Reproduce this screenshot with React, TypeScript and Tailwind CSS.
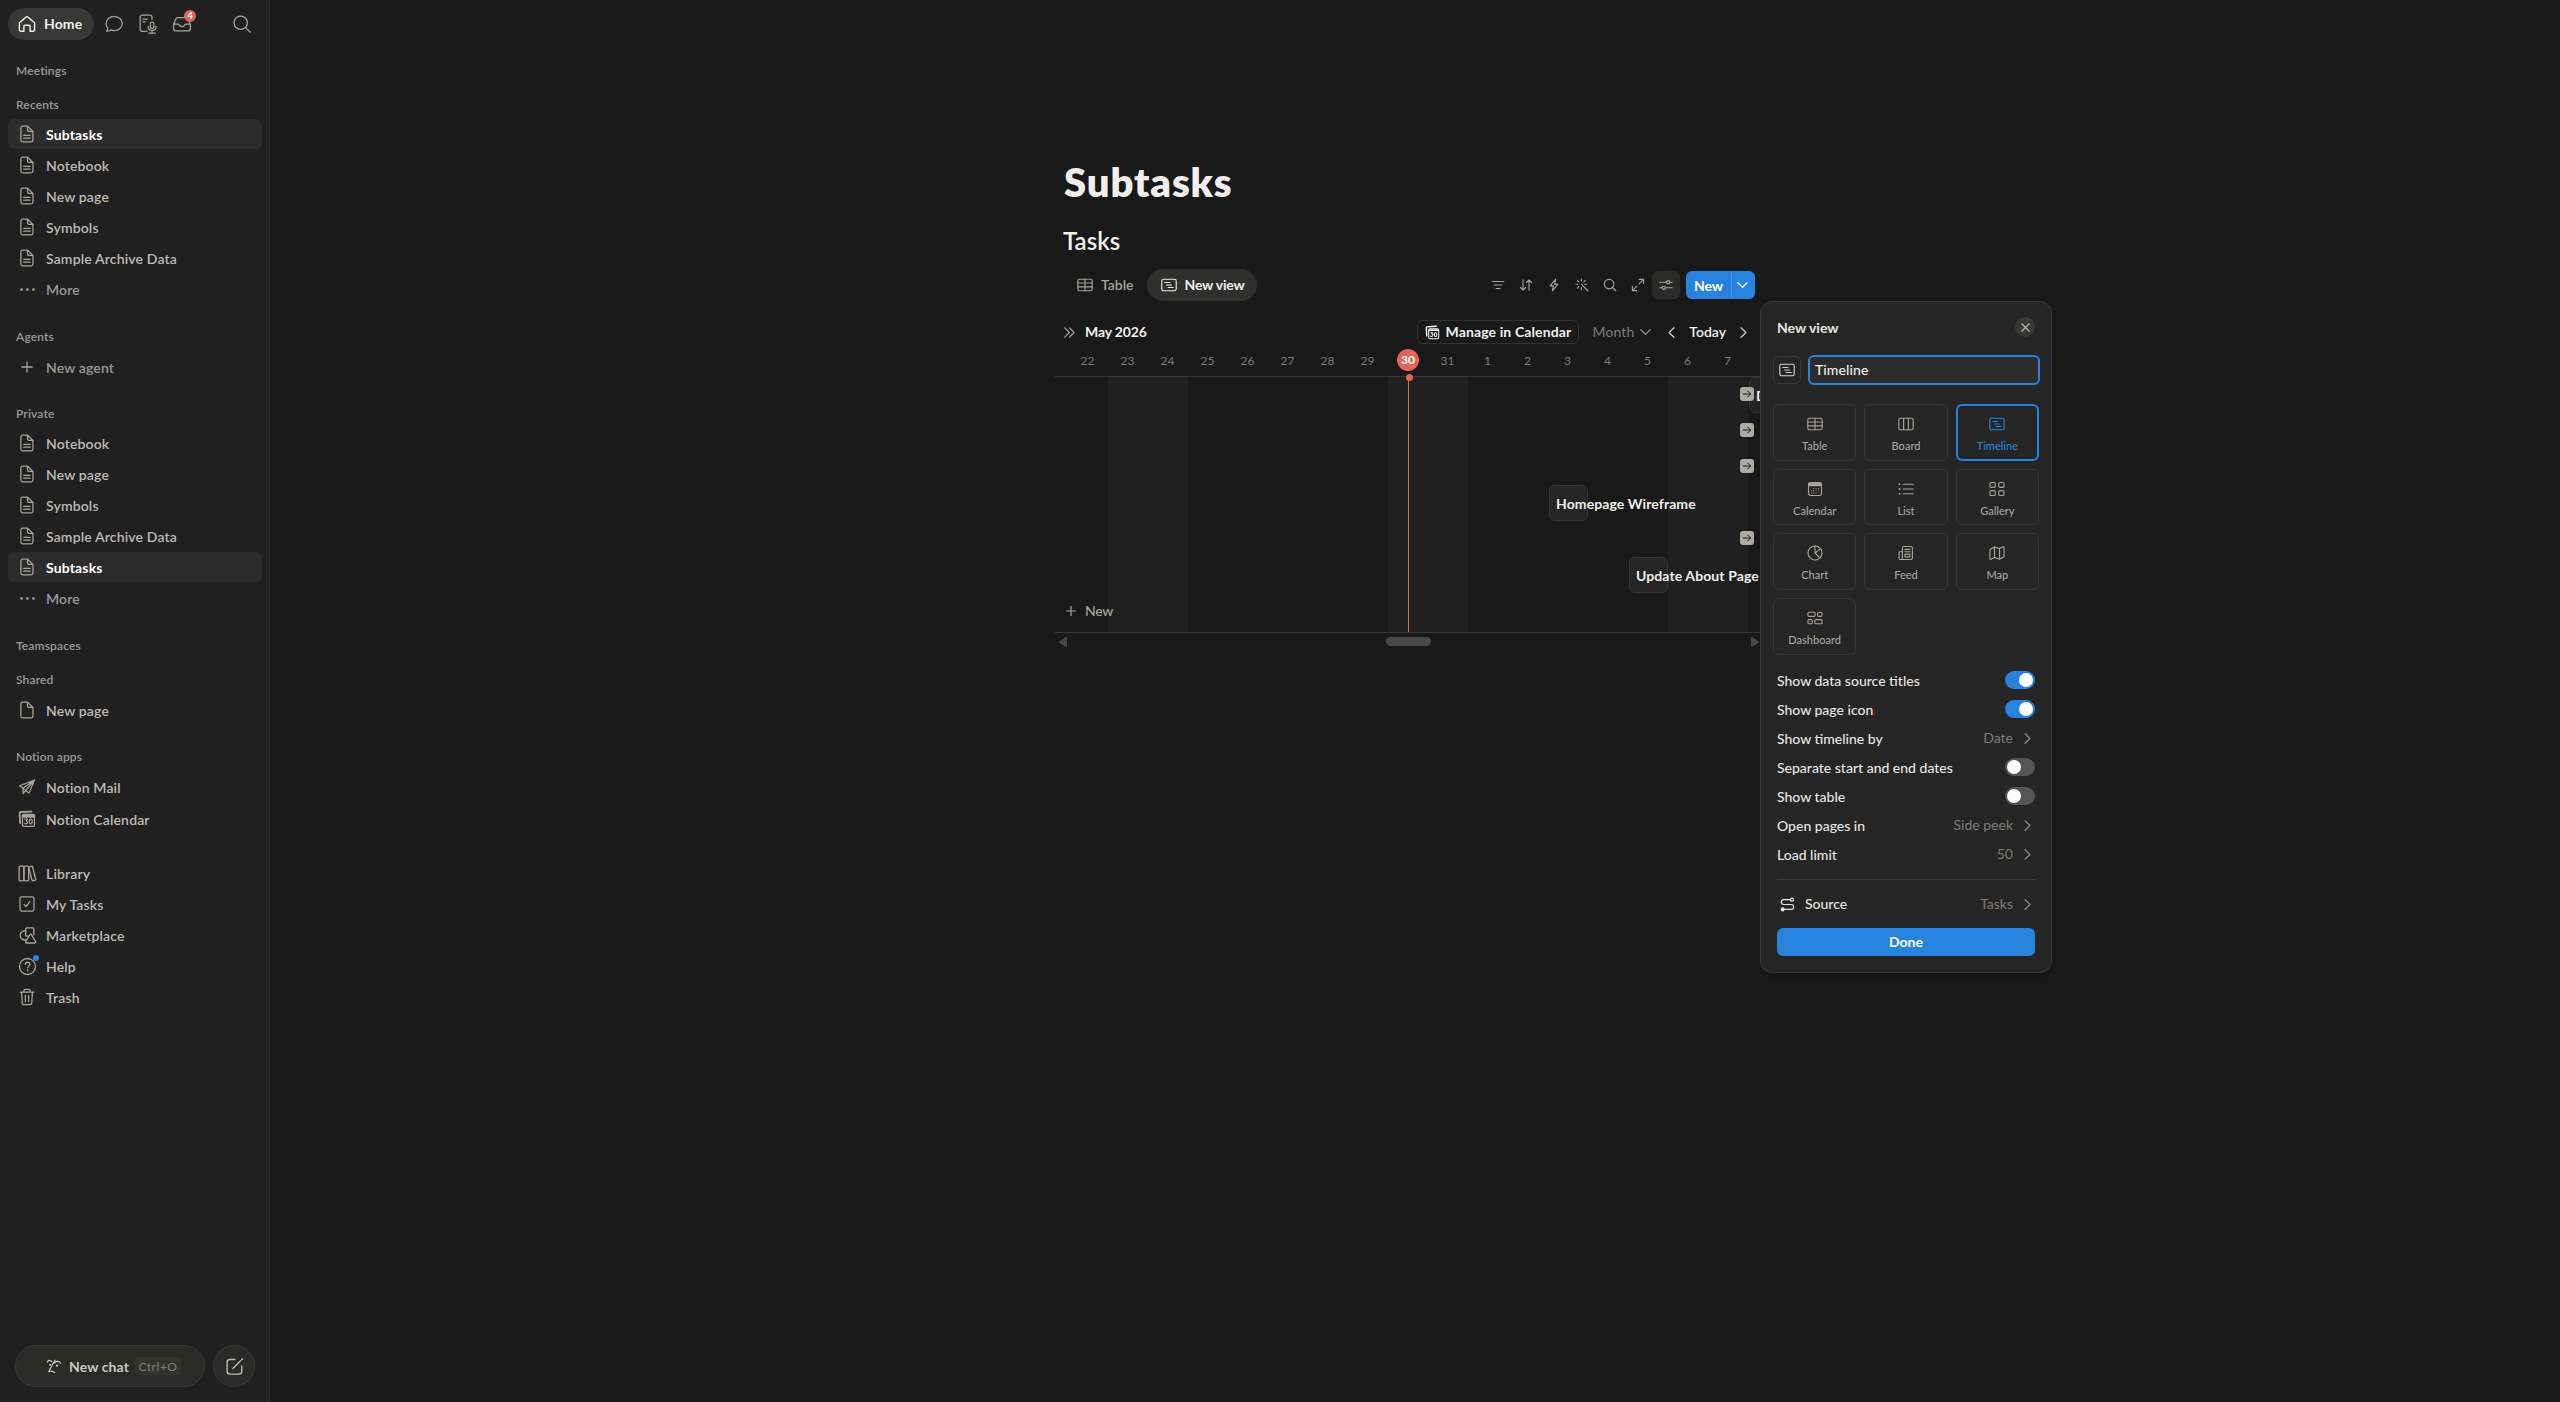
import type { ReactNode } from 'react';
import clsx from 'clsx';

type IconProps = { size?: number; className?: string; w?: number };

function Svg({ size = 20, className, w = 1.25, children }: IconProps & { children: ReactNode }) {
  return (
    <svg
      width={size}
      height={size}
      viewBox="0 0 20 20"
      fill="none"
      stroke="currentColor"
      strokeWidth={w}
      strokeLinecap="round"
      strokeLinejoin="round"
      className={clsx('shrink-0', className)}
    >
      {children}
    </svg>
  );
}

const HomeIcon = (p: IconProps) => (
  <Svg {...p}>
    <path d="M2.4 8.7 L9 3.1 a1.5 1.5 0 0 1 2 0 L17.6 8.7 V15.8 a1.4 1.4 0 0 1 -1.4 1.4 H13.1 V12.4 a1.2 1.2 0 0 0 -1.2 -1.2 H8.1 a1.2 1.2 0 0 0 -1.2 1.2 V17.2 H3.8 a1.4 1.4 0 0 1 -1.4 -1.4 Z" />
  </Svg>
);
const ChatIcon = (p: IconProps) => (
  <Svg {...p}>
    <path d="M10.2 2.5 c4.5 0 8.1 3.1 8.1 7 s-3.6 7 -8.1 7 c-1.2 0 -2.3 -.2 -3.3 -.6 c-1.2 .9 -2.7 1.3 -4.4 1.3 c.7 -.8 1.2 -1.7 1.3 -2.9 c-1.1 -1.2 -1.7 -2.9 -1.7 -4.8 c0 -3.9 3.6 -7 8.1 -7 Z" />
  </Svg>
);
const MeetingIcon = (p: IconProps) => (
  <Svg {...p}>
    <path d="M9 17.3 H4.2 a2 2 0 0 1 -2 -2 V3 a2 2 0 0 1 2 -2 H12 a2 2 0 0 1 2 2 V5.2 M5 5 H9 M5 7.9 H7.2" />
    <rect x="12.3" y="8.2" width="3.6" height="6.3" rx="1.8" />
    <path d="M10.2 12.4 c0 2.6 1.6 4 3.9 4 s3.9 -1.4 3.9 -4 M14.1 16.4 V19 M10.8 19 H17.4" />
  </Svg>
);
const InboxIcon = (p: IconProps) => (
  <Svg {...p}>
    <path d="M1.6 10.6 L4 4.8 a1.8 1.8 0 0 1 1.7 -1.2 H14.3 a1.8 1.8 0 0 1 1.7 1.2 L18.4 10.6 V14.8 a2 2 0 0 1 -2 2 H3.6 a2 2 0 0 1 -2 -2 Z M1.8 10 H6 c.6 0 .9 .3 1.1 .8 c.4 1.2 1.4 1.9 2.9 1.9 s2.5 -.7 2.9 -1.9 c.2 -.5 .5 -.8 1.1 -.8 H18.2" />
  </Svg>
);
const SearchIcon = (p: IconProps) => (
  <Svg {...p}>
    <circle cx="8.7" cy="8.7" r="6.7" />
    <path d="M13.6 13.6 L18.2 18.2" />
  </Svg>
);
const BlankPageIcon = (p: IconProps) => (
  <Svg {...p}>
    <path d="M5.2 1.2 H10.6 L16.6 7.2 V16.8 a2 2 0 0 1 -2 2 H5.2 a2 2 0 0 1 -2 -2 V3.2 a2 2 0 0 1 2 -2 Z M10.6 1.4 V5.5 a1.6 1.6 0 0 0 1.6 1.6 H16.4" />
  </Svg>
);
const PageIcon = (p: IconProps) => (
  <Svg {...p}>
    <path d="M5.2 1.2 H10.6 L16.6 7.2 V16.8 a2 2 0 0 1 -2 2 H5.2 a2 2 0 0 1 -2 -2 V3.2 a2 2 0 0 1 2 -2 Z M10.6 1.4 V5.5 a1.6 1.6 0 0 0 1.6 1.6 H16.4 M6.3 11.4 H13.5 M6.3 14.6 H13.5" />
  </Svg>
);
const DotsIcon = (p: IconProps) => (
  <Svg {...p}>
    <g fill="currentColor" stroke="none">
      <circle cx="3" cy="10" r="1.5" />
      <circle cx="10" cy="10" r="1.5" />
      <circle cx="17" cy="10" r="1.5" />
    </g>
  </Svg>
);
const PlusIcon = (p: IconProps) => (
  <Svg {...p}>
    <path d="M10 4.2 V15.8 M4.2 10 H15.8" />
  </Svg>
);
const MailIcon = (p: IconProps) => (
  <Svg {...p}>
    <path d="M18.3 2.2 L1.8 8.6 L5.6 11.4 V17.2 L8.6 13.9 L12.2 16.8 Z M5.6 11.4 L18.3 2.2 M18.3 2.2 L8.6 13.9 M5.6 11.4 L7 12.6" />
  </Svg>
);
const NotionCalendarIcon = ({ solid, ...p }: IconProps & { solid?: boolean }) => (
  <Svg {...p} w={1.4}>
    <path d="M15 1.7 L3.4 2.2 a1.6 1.6 0 0 0 -1.6 1.7 L2.4 14.5" strokeWidth="2" />
    <rect x="5" y="5" width="13.3" height="13.2" rx="1.6" />
    <path d="M5.2 6.3 H18.1 M5.2 7.4 H18.1" strokeWidth={solid ? 2.2 : 1.4} />
    <path d="M7.6 10.2 H10.4 L9 12 c2.2 0 2 3.4 -.1 3.4 c-.6 0 -1.1 -.2 -1.4 -.6" />
    <rect x="12.6" y="10.2" width="3.1" height="5.2" rx="1.5" />
  </Svg>
);
const LibraryIcon = (p: IconProps) => (
  <Svg {...p}>
    <rect x="1.2" y="2.2" width="5" height="15.6" rx="1.2" />
    <rect x="6.2" y="2.2" width="5" height="15.6" rx="1.2" />
    <path d="M11.4 4 a1 1 0 0 1 .8 -1.2 l1.9 -.4 a1 1 0 0 1 1.2 .8 L18.6 16 a1 1 0 0 1 -.8 1.2 l-1.9 .4 a1 1 0 0 1 -1.2 -.8 Z" />
  </Svg>
);
const TasksIcon = (p: IconProps) => (
  <Svg {...p}>
    <rect x="2.2" y="2.2" width="15.6" height="15.6" rx="2" />
    <path d="M6.8 10.4 L9 12.8 L13.2 7.2" />
  </Svg>
);
const MarketIcon = (p: IconProps) => (
  <Svg {...p}>
    <path d="M8 5.2 V3.2 a1.3 1.3 0 0 1 1.3 -1.3 H15.4 a1.3 1.3 0 0 1 1.3 1.3 V9.4 M8.6 14.5 A4.8 4.8 0 1 1 8.6 5.4 M8 5.2 V9.4 a1.3 1.3 0 0 0 1.3 1.3 H10.6" />
    <path d="M12.4 9.2 a1 1 0 0 1 1.8 0 L18.6 16.4 a1 1 0 0 1 -.8 1.5 H9 a1 1 0 0 1 -.9 -1.5 Z" />
  </Svg>
);
const HelpIcon = (p: IconProps) => (
  <Svg {...p}>
    <circle cx="10" cy="10" r="8.4" />
    <path d="M7.7 7.8 c.1 -1.5 1.1 -2.3 2.4 -2.3 c1.4 0 2.4 .9 2.4 2.2 c0 1.9 -2.4 2 -2.4 3.9" />
    <circle cx="10.1" cy="14.1" r=".9" fill="currentColor" stroke="none" />
  </Svg>
);
const TrashIcon = (p: IconProps) => (
  <Svg {...p}>
    <path d="M2.4 4.7 H17.6 M6.6 4.5 V3.2 a1.7 1.7 0 0 1 1.7 -1.7 H11.7 a1.7 1.7 0 0 1 1.7 1.7 V4.5 M4 4.9 L4.7 16.3 a2.2 2.2 0 0 0 2.2 2.2 H13.1 a2.2 2.2 0 0 0 2.2 -2.2 L16 4.9 M8.2 8.2 V15.2 M11.8 8.2 V15.2" />
  </Svg>
);
const FaceIcon = (p: IconProps) => (
  <Svg {...p} w={1.4}>
    <path d="M2.6 5.4 c1.2 -2.2 3.7 -2.3 5 -.2 M10.9 6.6 c2 -2.8 4.9 -2.7 6.3 .2 M11.2 3.6 C8.8 7.5 6 12.3 4.2 16.4 c1.6 -.9 3.6 -.9 6.4 .9" />
    <circle cx="5.8" cy="8.6" r=".5" fill="currentColor" />
    <circle cx="13.3" cy="9.6" r=".5" fill="currentColor" />
  </Svg>
);
const ComposeIcon = (p: IconProps) => (
  <Svg {...p} w={1.5}>
    <path d="M10.5 2.6 H5.2 a3 3 0 0 0 -3 3 V15 a3 3 0 0 0 3 3 H14.6 a3 3 0 0 0 3 -3 V9.6 M8.3 12 L16.4 3.9" />
    <path d="M17.9 2.4 L18.1 2.2" strokeWidth="2" />
  </Svg>
);
const TableIcon = (p: IconProps) => (
  <Svg {...p}>
    <rect x="1" y="2.8" width="18" height="14.4" rx="2.2" />
    <path d="M1 7.5 H19 M1 12.3 H19 M10 2.8 V17.2" />
  </Svg>
);
const TimelineIcon = (p: IconProps) => (
  <Svg {...p}>
    <rect x="1" y="2.8" width="18" height="14.4" rx="2.2" />
    <path d="M4.8 6.8 H11 M7 10 H13 M9 13.2 H15.2" />
  </Svg>
);
const BoardIcon = (p: IconProps) => (
  <Svg {...p}>
    <rect x="1" y="2.8" width="18" height="14.4" rx="2.2" />
    <path d="M7 2.8 V17.2 M13 2.8 V17.2" />
  </Svg>
);
const CalendarIcon = (p: IconProps) => (
  <Svg {...p}>
    <rect x="1.9" y="1.9" width="16.2" height="16.2" rx="2.2" />
    <path d="M2.8 3.8 H17.2 M2.8 5.4 H17.2" strokeWidth="2.4" />
    <path
      d="M8.2 9.4 H8.3 M11.3 9.4 H11.4 M14.4 9.4 H14.5 M5.4 12.2 H5.5 M8.2 12.2 H8.3 M11.3 12.2 H11.4 M14.4 12.2 H14.5 M5.4 15 H5.5 M8.2 15 H8.3 M11.3 15 H11.4"
      strokeWidth="1.5"
    />
  </Svg>
);
const ListIcon = (p: IconProps) => (
  <Svg {...p}>
    <path d="M6.5 4 H19 M6.5 10 H19 M6.5 16 H19" />
    <path d="M1.8 4 H2 M1.8 10 H2 M1.8 16 H2" strokeWidth="2.2" />
  </Svg>
);
const GalleryIcon = (p: IconProps) => (
  <Svg {...p}>
    <rect x="1.2" y="1.8" width="6.6" height="6.2" rx="1.4" />
    <rect x="12.2" y="1.8" width="6.6" height="6.2" rx="1.4" />
    <rect x="1.2" y="12" width="6.6" height="6.2" rx="1.4" />
    <rect x="12.2" y="12" width="6.6" height="6.2" rx="1.4" />
  </Svg>
);
const ChartIcon = (p: IconProps) => (
  <Svg {...p}>
    <circle cx="10" cy="10" r="8.8" />
    <path d="M10 1.2 V10 L17 4.8 M10 10 L16.2 16.2" />
  </Svg>
);
const FeedIcon = (p: IconProps) => (
  <Svg {...p}>
    <path d="M5.5 15.4 V3.8 a2 2 0 0 1 2 -2 H16 a2 2 0 0 1 2 2 V16.2 a2 2 0 0 1 -2 2 H3.3 a2 2 0 0 1 -2 -2 V9.6 a1.2 1.2 0 0 1 1.2 -1.2 H5.5 M5.5 15.4 V16 a2.1 2.1 0 0 1 -2.1 2.2 M8.5 5.4 H15 M8.5 8.4 H15" />
    <rect x="8.7" y="11.4" width="6.2" height="3.4" rx=".5" />
  </Svg>
);
const MapIcon = (p: IconProps) => (
  <Svg {...p}>
    <path d="M1.2 5.5 L6.8 2.4 L13.2 4.5 L17.6 2.2 a.8 .8 0 0 1 1.2 .7 V14.7 L13.2 17.7 L6.8 15.5 L2.4 17.8 a.8 .8 0 0 1 -1.2 -.7 Z M6.8 2.4 V15.5 M13.2 4.5 V17.7" />
  </Svg>
);
const DashboardIcon = (p: IconProps) => (
  <Svg {...p}>
    <rect x="1.2" y="2.8" width="9" height="5.2" rx="1.4" />
    <rect x="13.4" y="2.8" width="5.4" height="5.2" rx="1.4" />
    <rect x="1.2" y="12" width="5.4" height="5.2" rx="1.4" />
    <rect x="9.8" y="12" width="9" height="5.2" rx="1.4" />
  </Svg>
);
const FilterIcon = (p: IconProps) => (
  <Svg {...p} w={1.6}>
    <path d="M1.6 5 H18.4 M4.6 10 H15.4 M7.4 15 H12.6" />
  </Svg>
);
const SortIcon = (p: IconProps) => (
  <Svg {...p} w={1.6}>
    <path d="M5.7 2.5 V17.3 M2 13.6 L5.7 17.3 L9.4 13.6 M14.3 17.5 V2.7 M10.6 6.4 L14.3 2.7 L18 6.4" />
  </Svg>
);
const BoltIcon = (p: IconProps) => (
  <Svg {...p} w={1.6}>
    <path d="M12.4 1.6 L4.4 11.2 H9 L7.6 18.4 L15.6 8.8 H11 Z" />
  </Svg>
);
const MagicIcon = (p: IconProps) => (
  <Svg {...p} w={1.6}>
    <path d="M9.2 9.2 L18.6 18.6 M9 1.4 V4.2 M1.4 9 H4.2 M3.5 3.5 L5.5 5.5 M14.5 3.5 L12.5 5.5 M3.5 14.5 L5.5 12.5 M9 13.8 V16.6 M13.8 9 H16.6" />
  </Svg>
);
const ExpandIcon = (p: IconProps) => (
  <Svg {...p} w={1.6}>
    <path d="M12 2 H18 V8 M18 2 L11.6 8.4 M8 18 H2 V12 M2 18 L8.4 11.6" />
  </Svg>
);
const SlidersIcon = (p: IconProps) => (
  <Svg {...p} w={1.6}>
    <path d="M1.2 6 H10.6 M15.6 6 H18.8 M1.2 14 H4.4 M9.4 14 H18.8" />
    <circle cx="13.1" cy="6" r="2.3" />
    <circle cx="6.9" cy="14" r="2.3" />
  </Svg>
);
const ArrowRight = (p: IconProps) => (
  <Svg {...p} w={2}>
    <path d="M2.5 10 H17.2 M11.6 4.2 L17.4 10 L11.6 15.8" />
  </Svg>
);
const SourceIcon = (p: IconProps) => (
  <Svg {...p} w={1.6}>
    <path d="M14 3.5 H5 a3.2 3.2 0 0 0 0 6.5 H15 a3.2 3.2 0 0 1 0 6.5 H5" />
    <circle cx="16" cy="3.5" r="1.9" />
    <circle cx="3.5" cy="16.5" r="1.9" fill="currentColor" />
  </Svg>
);

function Chevron({ d, className, w = 9, h = 11 }: { d: 'left' | 'right' | 'down'; className?: string; w?: number; h?: number }) {
  return (
    <svg
      width={w}
      height={h}
      viewBox={`0 0 ${w} ${h}`}
      fill="none"
      stroke="currentColor"
      strokeWidth="1.3"
      strokeLinecap="round"
      strokeLinejoin="round"
      className={clsx('shrink-0', className)}
    >
      {d === 'left' && <path d={`M${w / 2 + 2.4} .8 L${w / 2 - 2.4} ${h / 2} L${w / 2 + 2.4} ${h - 0.8}`} />}
      {d === 'right' && <path d={`M${w / 2 - 2.4} .8 L${w / 2 + 2.4} ${h / 2} L${w / 2 - 2.4} ${h - 0.8}`} />}
      {d === 'down' && <path d={`M.8 ${h / 2 - 2.2} L${w / 2} ${h / 2 + 2.2} L${w - 0.8} ${h / 2 - 2.2}`} />}
    </svg>
  );
}

function Label({ children, className }: { children: string; className?: string }) {
  return (
    <div className={clsx('flex h-[30px] items-center pl-2 text-xs font-semibold tracking-[0.15px] text-[#9b9a97]', className)}>
      <span className="pt-px">{children}</span>
    </div>
  );
}

type RowProps = { icon: ReactNode; text: string; active?: boolean; muted?: boolean; className?: string };

function Row({ icon, text, active, muted, className }: RowProps) {
  return (
    <div
      className={clsx(
        'mb-px flex h-[30px] items-center rounded-md pl-2 text-sm',
        active ? 'bg-[#2c2c2c] font-bold text-white' : muted ? 'font-semibold text-[#9b9a97]' : 'font-semibold text-[#bcbab6]',
        className,
      )}
    >
      <span className="relative flex w-[22px] justify-center text-[#a8a49c]">{icon}</span>
      <span className="ml-2 pt-[2px] leading-5 tracking-[0.15px]">{text}</span>
    </div>
  );
}

const page = <PageIcon size={18} w={1.4} />;
const dots = <DotsIcon size={17} />;

function Sidebar() {
  return (
    <aside className="flex h-full w-[270px] shrink-0 flex-col border-r border-[#2b2b2b] bg-[#202020] pr-[7px] pl-2">
      <div className="mt-2 flex h-8 items-center text-[#a8a49c]">
        <div className="flex h-8 w-[86px] items-center rounded-full bg-[#373735] pl-[9px] text-[#f0efed]">
          <HomeIcon size={20} w={1.4} />
          <span className="ml-[7px] text-sm font-bold tracking-[0.1px]">Home</span>
        </div>
        <ChatIcon size={20} className="ml-[10px]" />
        <MeetingIcon size={20} className="ml-[14px]" />
        <div className="relative ml-[14px] flex">
          <InboxIcon size={20} />
          <span className="absolute -top-[4px] left-[12px] flex size-3 items-center justify-center rounded-full bg-[#e56458] text-[9px] font-bold text-white">4</span>
        </div>
        <SearchIcon size={20} className="ml-[40px]" />
      </div>

      <Label className="mt-[15px]">Meetings</Label>
      <Label className="mt-1">Recents</Label>
      <Row icon={page} text="Subtasks" active />
      <Row icon={page} text="Notebook" />
      <Row icon={page} text="New page" />
      <Row icon={page} text="Symbols" />
      <Row icon={page} text="Sample Archive Data" />
      <Row icon={dots} text="More" muted />

      <Label className="mt-4">Agents</Label>
      <Row icon={<PlusIcon size={18} w={1.4} />} text="New agent" muted className="mt-px" />

      <Label className="mt-[15px]">Private</Label>
      <Row icon={page} text="Notebook" />
      <Row icon={page} text="New page" />
      <Row icon={page} text="Symbols" />
      <Row icon={page} text="Sample Archive Data" />
      <Row icon={page} text="Subtasks" active />
      <Row icon={dots} text="More" muted />

      <Label className="mt-4">Teamspaces</Label>
      <Label className="mt-1">Shared</Label>
      <Row icon={<BlankPageIcon size={18} w={1.4} />} text="New page" className="mt-px" />

      <Label className="mt-[15px]">Notion apps</Label>
      <Row icon={<MailIcon size={18} w={1.4} />} text="Notion Mail" className="mt-px" />
      <Row icon={<NotionCalendarIcon size={18} solid />} text="Notion Calendar" className="mt-px" />

      <Row icon={<LibraryIcon size={19} w={1.4} />} text="Library" className="mt-[23px]" />
      <Row icon={<TasksIcon size={18} w={1.4} />} text="My Tasks" />
      <Row icon={<MarketIcon size={19} w={1.4} />} text="Marketplace" />
      <Row
        icon={
          <>
            <HelpIcon size={19} w={1.4} />
            <span className="absolute -top-[2px] left-[17px] size-[6px] rounded-full bg-[#2783de]" />
          </>
        }
        text="Help"
      />
      <Row icon={<TrashIcon size={18} w={1.4} />} text="Trash" />

      <div className="mt-auto mb-[15px] flex gap-2 pl-[7px]">
        <div className="flex h-[42px] w-[190px] items-center rounded-full border border-[#383836] bg-[#2a2a28] pl-[29px] text-[#c9c7c2]">
          <FaceIcon size={18} />
          <span className="ml-[6px] pt-px text-sm font-bold tracking-[0.1px]">New chat</span>
          <span className="ml-[6px] flex h-[18px] w-[46px] items-center justify-center rounded bg-[#323230] pt-px text-xs font-medium tracking-[0.5px] text-[#7d7a75]">
            Ctrl+O
          </span>
        </div>
        <div className="flex size-[42px] items-center justify-center rounded-full border border-[#383836] bg-[#2a2a28] text-[#bcb9b2]">
          <ComposeIcon size={19} />
        </div>
      </div>
    </aside>
  );
}

const days = ['22', '23', '24', '25', '26', '27', '28', '29', '30', '31', '1', '2', '3', '4', '5', '6', '7'];
const weekend = ['23', '24', '30', '31', '6', '7'];

const tasks = [
  { x: 694, y: 0, w: 59, name: 'Design' },
  { x: 494, y: 108, w: 39, name: 'Homepage Wireframe' },
  { x: 574, y: 180, w: 39, name: 'Update About Page' },
];
const offscreen = [10, 46, 82, 154];

function Timeline() {
  return (
    <div className="w-[705px] overflow-hidden">
      <div className="flex h-[38px] items-center pl-[9px]">
        <svg width="11" height="11" viewBox="0 0 11 11" fill="none" stroke="#a8a49c" strokeWidth="1.2" strokeLinecap="round" strokeLinejoin="round">
          <path d="M.8 .8 L5.3 5.5 L.8 10.2 M5.6 .8 L10.1 5.5 L5.6 10.2" />
        </svg>
        <span className="ml-[10px] text-sm font-bold tracking-[-0.15px] text-[#f0efed]">May 2026</span>
        <div className="ml-auto flex h-6 w-[162px] items-center rounded-md border border-[#323230] pl-[7px] text-[#f0efed]">
          <NotionCalendarIcon size={15} />
          <span className="ml-[6px] text-sm font-bold tracking-[0.12px] whitespace-nowrap">Manage in Calendar</span>
        </div>
        <span className="ml-[14px] text-sm tracking-[0.1px] text-[#7d7a75]">Month</span>
        <Chevron d="down" w={11} h={8} className="ml-[6px] text-[#8d8a85]" />
        <Chevron d="left" className="ml-[16px] text-[#c9c7c2]" />
        <span className="ml-[13px] text-sm font-semibold text-[#f0efed]">Today</span>
        <Chevron d="right" className="mr-[12px] ml-[13px] text-[#c9c7c2]" />
      </div>
      <div className="flex h-[25px] pt-[1px] pl-[13px]">
        {days.map((d) => (
          <div key={d} className="flex h-[16px] w-10 shrink-0 items-center justify-center text-xs tracking-[0.1px] text-[#7d7a75]">
            {d === '30' ? (
              <span className="flex size-[22px] shrink-0 items-center justify-center rounded-full bg-[#e56458] font-bold text-white">30</span>
            ) : (
              <span className="pt-px pr-px">{d}</span>
            )}
          </div>
        ))}
      </div>
      <div className="relative h-[257px] border-y border-[#383836]">
        <div className="flex h-full pl-[13px]">
          {days.map((d) => (
            <div key={d} className={clsx('h-full w-10 shrink-0', weekend.includes(d) && 'bg-[#202020]')} />
          ))}
        </div>
        <div className="absolute top-0 left-[353px] h-full w-px bg-[#e56458]" />
        <div className="absolute -top-[3px] left-[351px] size-[7px] rounded-full bg-[#e56458]" />
        {tasks.map((t) => (
          <div key={t.name} className="absolute flex h-9 items-center" style={{ left: t.x, top: t.y, width: t.w }}>
            <div className="h-9 w-full shrink-0 rounded-md border border-[#353535] bg-[#252525]" />
            <span className="absolute left-[7px] pt-px text-sm font-bold tracking-[0.1px] whitespace-nowrap text-[#f0efed]">{t.name}</span>
          </div>
        ))}
        {offscreen.map((y) => (
          <div key={y} className="absolute left-[685px] flex size-[14px] items-center justify-center rounded-[3px] bg-[#ada9a3] text-[#202020]" style={{ top: y }}>
            <ArrowRight size={10} />
          </div>
        ))}
        <div className="absolute bottom-[11px] left-[11px] flex items-center text-sm font-medium text-[#a8a49c]">
          <svg width="10" height="10" viewBox="0 0 10 10" stroke="currentColor" strokeWidth="1.2">
            <path d="M5 0 V10 M0 5 H10" />
          </svg>
          <span className="ml-[9px] tracking-[-0.3px]">New</span>
        </div>
      </div>
      <div className="flex h-[17px] items-center pl-1">
        <svg width="8" height="10" viewBox="0 0 8 10" fill="#484848">
          <path d="M8 1 V9 a1 1 0 0 1 -1.5 .8 L.5 5.8 a1 1 0 0 1 0 -1.6 L6.5 .2 A1 1 0 0 1 8 1 Z" />
        </svg>
        <div className="ml-[319px] h-[9px] w-[45px] rounded-full bg-[#484848]" />
        <svg width="8" height="10" viewBox="0 0 8 10" fill="#484848" className="mr-[1px] ml-auto">
          <path d="M0 1 V9 a1 1 0 0 0 1.5 .8 L7.5 5.8 a1 1 0 0 0 0 -1.6 L1.5 .2 A1 1 0 0 0 0 1 Z" />
        </svg>
      </div>
    </div>
  );
}

const views = [
  { name: 'Table', Icon: TableIcon },
  { name: 'Board', Icon: BoardIcon },
  { name: 'Timeline', Icon: TimelineIcon },
  { name: 'Calendar', Icon: CalendarIcon },
  { name: 'List', Icon: ListIcon },
  { name: 'Gallery', Icon: GalleryIcon },
  { name: 'Chart', Icon: ChartIcon },
  { name: 'Feed', Icon: FeedIcon },
  { name: 'Map', Icon: MapIcon },
  { name: 'Dashboard', Icon: DashboardIcon },
];

const settings: { label: string; on?: boolean; value?: string }[] = [
  { label: 'Show data source titles', on: true },
  { label: 'Show page icon', on: true },
  { label: 'Show timeline by', value: 'Date' },
  { label: 'Separate start and end dates', on: false },
  { label: 'Show table', on: false },
  { label: 'Open pages in', value: 'Side peek' },
  { label: 'Load limit', value: '50' },
];

function Value({ children }: { children?: string }) {
  return (
    <span className="flex items-center text-sm text-[#7d7a75]">
      <span>{children}</span>
      <Chevron d="right" className="mr-[3px] ml-[10px] text-[#8d8a85]" />
    </span>
  );
}

function NewViewPanel() {
  return (
    <div className="absolute top-[301px] left-[1760px] flex h-[672px] w-[292px] flex-col rounded-xl border border-[#383836] bg-[#252525] shadow-lg">
      <div className="flex h-[50px] items-center justify-between pr-4 pl-4">
        <span className="pt-[2px] text-sm font-bold text-[#e6e5e3]">New view</span>
        <span className="flex size-5 items-center justify-center rounded-full bg-[#383836]">
          <svg width="9" height="9" viewBox="0 0 9 9" stroke="#bcbab6" strokeWidth="1.1">
            <path d="M.5 .5 L8.5 8.5 M8.5 .5 L.5 8.5" />
          </svg>
        </span>
      </div>
      <div className="mt-[3px] flex items-center pl-3">
        <span className="flex size-7 items-center justify-center rounded-md border border-[#383836] text-[#d3d1cb]">
          <TimelineIcon size={16} w={1.4} />
        </span>
        <div className="ml-[7px] flex h-[30px] w-[232px] items-center rounded-md border-2 border-[#2783de] bg-[#2c2c2c] pl-[5px] text-sm font-medium tracking-[0.1px] text-[#f0efed]">
          Timeline
        </div>
      </div>
      <div className="mt-[19px] grid grid-cols-3 gap-2 pr-3 pl-3">
        {views.map(({ name, Icon }) => (
          <div
            key={name}
            className={clsx(
              'flex h-[56.7px] flex-col items-center rounded-md text-[11px] font-medium',
              name === 'Timeline' ? 'border-2 border-[#2783de] pt-[10px] text-[#2783de]' : 'border border-[#353533] pt-[11px] text-[#a8a49c]',
            )}
          >
            <Icon size={16} w={1.4} />
            <span className="mt-[6px] leading-4">{name}</span>
          </div>
        ))}
      </div>
      <div className="mt-[11px]">
        {settings.map((s) => (
          <div key={s.label} className="flex h-[29px] items-center justify-between pr-4 pl-4">
            <span className="pt-px text-sm font-medium text-[#e6e5e3]">{s.label}</span>
            {s.value ? (
              <Value>{s.value}</Value>
            ) : (
              <span className={clsx('flex h-[18px] w-[30px] items-center rounded-full px-[2px]', s.on ? 'justify-end bg-[#2783de]' : 'bg-[#545454]')}>
                <span className="size-[14px] rounded-full bg-white" />
              </span>
            )}
          </div>
        ))}
      </div>
      <div className="mx-4 mt-[10px] h-px bg-[#383836]" />
      <div className="mt-[10px] flex h-[29px] items-center pr-4 pl-[19px] text-[#e6e5e3]">
        <SourceIcon size={15} />
        <span className="mr-auto ml-[10px] text-sm font-medium">Source</span>
        <Value>Tasks</Value>
      </div>
      <div className="mx-4 mt-[9px] flex h-7 items-center justify-center rounded-md bg-[#2783de] text-sm font-bold text-white">Done</div>
    </div>
  );
}

export default function App() {
  return (
    <div className="relative flex h-[1402px] w-[2560px] overflow-hidden bg-[#191919] font-['Lato',sans-serif]">
      <Sidebar />
      <main className="flex-1 pt-[158px] pl-[785px]">
        <h1 className="pl-[9px] text-[40px] leading-[48px] font-extrabold tracking-[0.9px] text-[#f0efed]">Subtasks</h1>
        <h2 className="mt-[19px] pl-2 text-2xl leading-8 font-semibold text-[#f0efed]">Tasks</h2>
        <div className="mt-[12px] flex h-8 w-[700px] items-center pl-[22px] text-[#a8a49c]">
          <TableIcon size={16} w={1.4} />
          <span className="ml-2 text-sm font-semibold">Table</span>
          <div className="ml-[13px] flex h-8 w-[110px] items-center rounded-full bg-[#2f2f2d] pl-[14px] text-[#f0efed]">
            <TimelineIcon size={16} w={1.4} />
            <span className="ml-2 text-sm font-bold tracking-[-0.2px]">New view</span>
          </div>
          <div className="ml-auto flex items-center gap-[14px]">
            <FilterIcon size={14} />
            <SortIcon size={14} />
            <BoltIcon size={14} />
            <MagicIcon size={14} />
            <SearchIcon size={14} w={1.7} />
            <ExpandIcon size={14} />
          </div>
          <div className="ml-[7px] flex size-7 items-center justify-center rounded-md bg-[#2a2a28]">
            <SlidersIcon size={14} />
          </div>
          <div className="ml-[6px] flex h-7 w-[69px] items-center rounded-md bg-[#2783de] text-white">
            <span className="flex h-full w-[46px] items-center justify-center border-r border-[#4193e5] pt-px text-sm font-bold">New</span>
            <Chevron d="down" w={11} h={8} className="ml-[5px]" />
          </div>
        </div>
        <div className="mt-[12px]">
          <Timeline />
        </div>
      </main>
      <NewViewPanel />
    </div>
  );
}
